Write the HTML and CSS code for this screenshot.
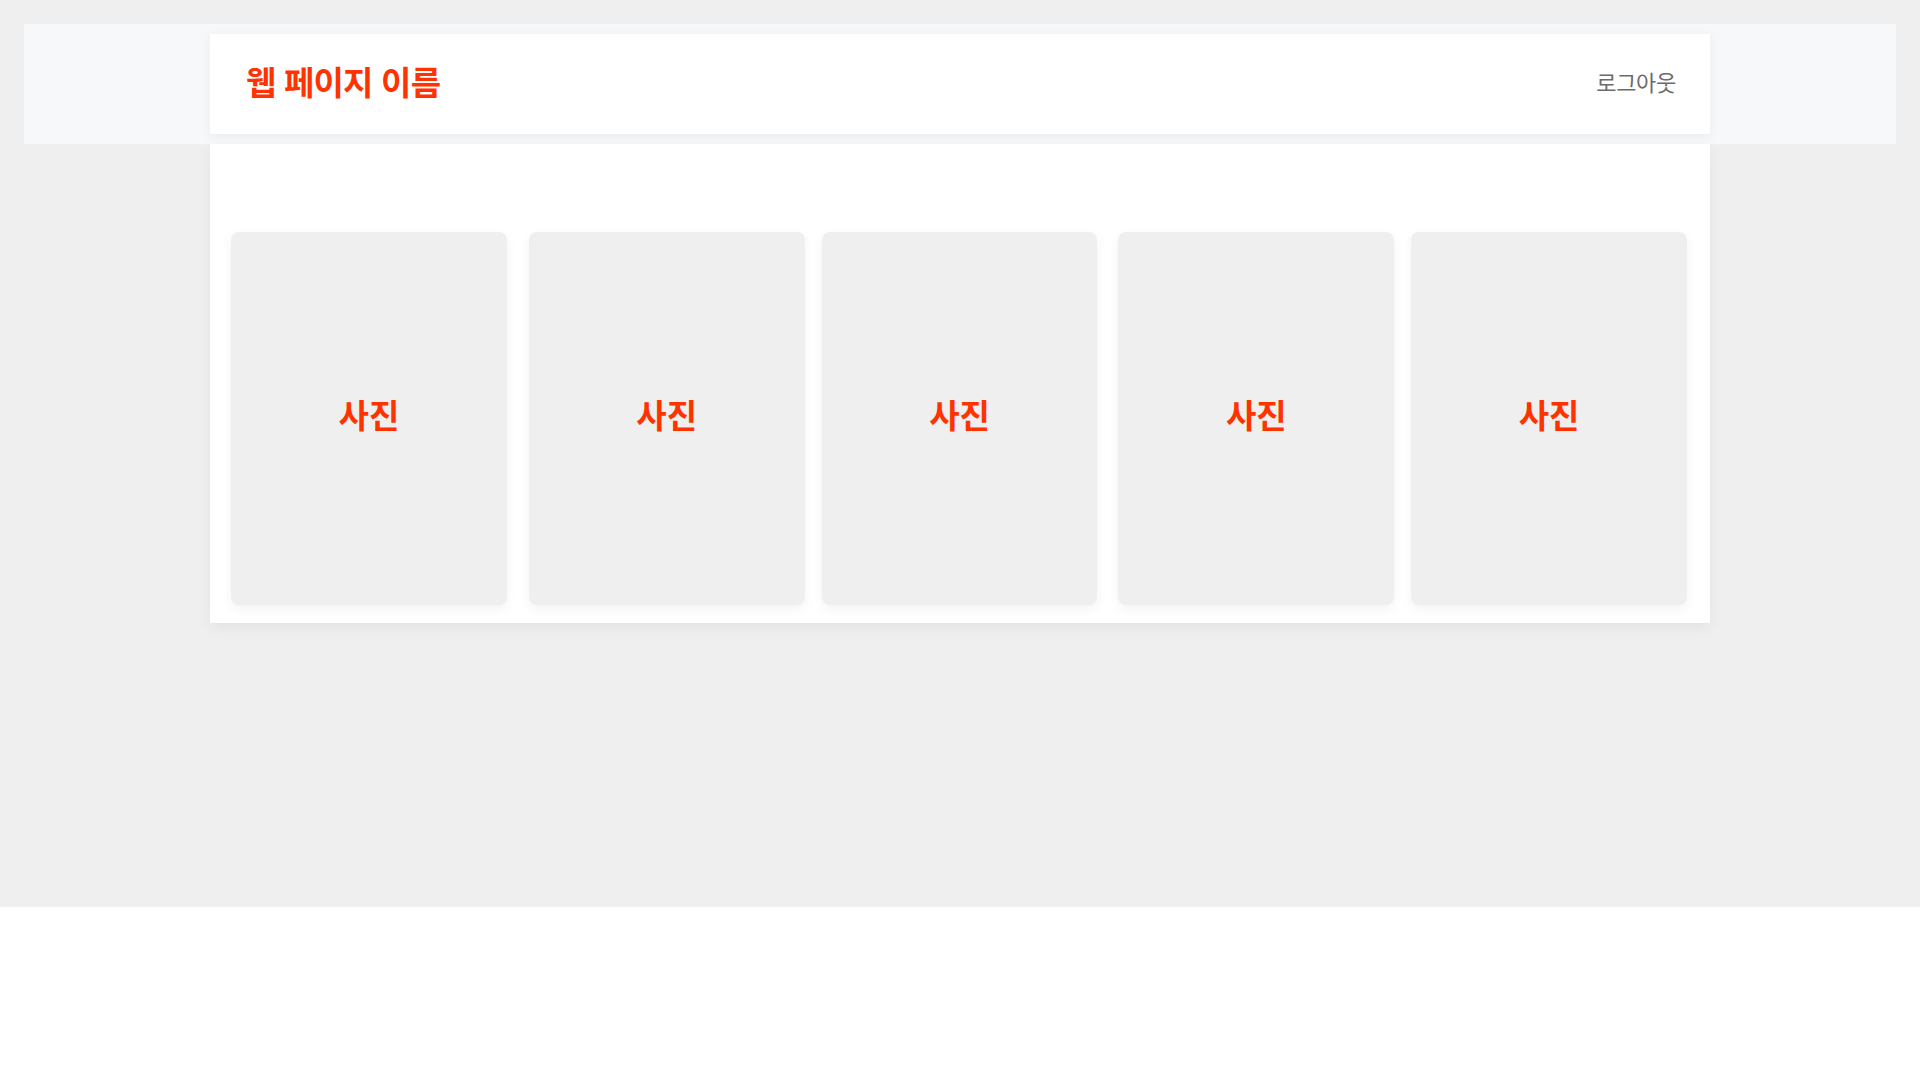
FILE: index.html
```html
<!DOCTYPE html>
<html lang="ko">
<head>
<meta charset="utf-8">
<title>웹 페이지 이름</title>
<link rel="stylesheet" href="styles.css">
</head>
<body>
<div class="page">
  <div class="band">
    <header class="topbar">
      <h1 class="brand">웹 페이지 이름</h1>
      <a class="logout" href="#">로그아웃</a>
    </header>
  </div>
  <main class="content">
    <div class="gallery">
      <div class="photo"><span>사진</span></div>
      <div class="photo"><span>사진</span></div>
      <div class="photo"><span>사진</span></div>
      <div class="photo"><span>사진</span></div>
      <div class="photo"><span>사진</span></div>
    </div>
  </main>
</div>
</body>
</html>
```
FILE: styles.css
```css
* { box-sizing: border-box; }
html, body {
  margin: 0;
  padding: 0;
  background: #ffffff;
  font-family: "Noto Sans CJK KR", "Noto Sans", sans-serif;
}
.page {
  background: #efefef;
  height: 907px;
  padding-top: 24px;
}
.band {
  margin: 0 24px;
  background: #f7f8fa;
  padding: 10px 0;
}
.topbar {
  width: 1500px;
  height: 100px;
  margin: 0 auto;
  background: #ffffff;
  display: flex;
  align-items: center;
  justify-content: space-between;
  padding: 0 34px 6px 36px;
  box-shadow: 0 2px 10px rgba(0,0,0,0.06);
  position: relative;
}
.brand {
  margin: 0;
  font-size: 33px;
  font-weight: 700;
  color: #ff3300;
  line-height: 1;
  letter-spacing: -0.8px;
}
.logout {
  font-size: 22px;
  font-weight: 400;
  color: #6b6b6b;
  text-decoration: none;
  line-height: 1;
  letter-spacing: -0.3px;
}
.content {
  width: 1500px;
  margin: 0 auto;
  background: #ffffff;
  padding: 88px 23px 18px 21px;
  box-shadow: 0 4px 14px rgba(0,0,0,0.06);
}
.gallery {
  display: flex;
}
.photo {
  width: 276px;
  height: 373px;
  background: #efefef;
  border-radius: 8px;
  display: flex;
  align-items: center;
  justify-content: center;
  padding-bottom: 10px;
  box-shadow: 0 4px 12px rgba(0,0,0,0.05);
}
.photo + .photo { margin-left: 22px; }
.photo:nth-child(3), .photo:nth-child(5) { margin-left: 17px; }
.photo:nth-child(4) { margin-left: 21px; }
.photo span {
  font-size: 33px;
  font-weight: 700;
  color: #ff3300;
}
```
